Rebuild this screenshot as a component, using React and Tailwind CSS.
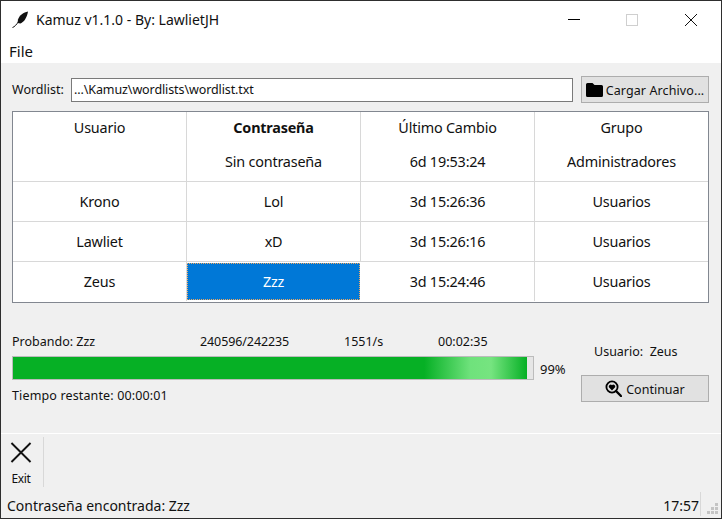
const rows = [
  { user: 'Krono', pass: 'Lol', time: '3d 15:26:36', group: 'Usuarios' },
  { user: 'Lawliet', pass: 'xD', time: '3d 15:26:16', group: 'Usuarios' },
  { user: 'Zeus', pass: 'Zzz', time: '3d 15:24:46', group: 'Usuarios', selected: true },
]

function Cell({ children, className = '' }) {
  return <div className={`flex items-center justify-center ${className}`}>{children}</div>
}

function TableRow({ row }) {
  return (
    <div className="grid h-10 grid-cols-[174px_174px_174px_1fr] border-t border-[#d8d8d8]">
      <Cell className="border-r border-[#d8d8d8]">{row.user}</Cell>
      {row.selected ? (
        <Cell className="mt-px mb-px mr-px border border-dotted border-[#f0a860] bg-[#0078d7] text-white">{row.pass}</Cell>
      ) : (
        <Cell className="border-r border-[#d8d8d8]">{row.pass}</Cell>
      )}
      <Cell className="border-r border-[#d8d8d8]">{row.time}</Cell>
      <Cell>{row.group}</Cell>
    </div>
  )
}

function Feather() {
  return (
    <svg width="17" height="17" viewBox="0 0 17 17">
      <path d="M16 0.500C11.500 1.500 7.500 4 6 8.500L5.500 12 8.500 12.500C12 11 15 6.500 16 0.500Z" fill="#111" />
      <path d="M0.500 16.500c2-.5 4-3 7-7" stroke="#111" strokeWidth="1" fill="none" />
    </svg>
  )
}

function Folder() {
  return (
    <svg width="17" height="14" viewBox="0 0 17 14">
      <path d="M1.500 0H6.500l2 2h7A1.500 1.500 0 0 1 17 3.500v9a1.500 1.500 0 0 1-1.500 1.500h-14A1.500 1.500 0 0 1 0 12.500v-11A1.500 1.500 0 0 1 1.500 0Z" fill="#000" />
    </svg>
  )
}

function HeartSearch() {
  return (
    <svg width="17" height="17" viewBox="0 0 17 17">
      <circle cx="7" cy="7" r="5.600" fill="none" stroke="#000" strokeWidth="1.800" />
      <path d="M11 11l5 5" stroke="#000" strokeWidth="2.400" strokeLinecap="round" />
      <path d="M7 10.500 3.900 7.300a1.900 1.900 0 0 1 3.100-2.100 1.900 1.900 0 0 1 3.100 2.100Z" fill="#000" />
    </svg>
  )
}

function SizeGrip() {
  return (
    <svg width="11" height="11" viewBox="0 0 11 11" fill="#c4c4c4">
      <rect x="8" y="0" width="3" height="3" />
      <rect x="4" y="4" width="3" height="3" />
      <rect x="8" y="4" width="3" height="3" />
      <rect x="0" y="8" width="3" height="3" />
      <rect x="4" y="8" width="3" height="3" />
      <rect x="8" y="8" width="3" height="3" />
    </svg>
  )
}

export default function App() {
  return (
    <div className="flex h-[519px] w-[722px] flex-col overflow-hidden border border-[#2e2e2e] bg-[#f0f0f0] font-['Noto_Sans',sans-serif] text-[#111]">
      {/* title bar + menu */}
      <div className="bg-white">
        <div className="flex h-[37px] items-center">
          <div className="ml-[11px] mr-[7px]"><Feather /></div>
          <span className="text-[14px]">Kamuz v1.1.0 - By: LawlietJH</span>
          <div className="ml-auto flex items-center">
            <div className="mr-[46px] h-px w-3 bg-black" />
            <div className="mr-[47px] h-3 w-3 border border-[#cfcfcf]" />
            <svg className="mr-[24px]" width="12" height="12" viewBox="0 0 12 12">
              <path d="M0 0l12 12M12 0L0 12" stroke="#111" strokeWidth="1" />
            </svg>
          </div>
        </div>
        <div className="flex h-[25px] items-center pl-[8px] pt-[2px] text-[15px]">File</div>
      </div>

      <div className="flex flex-col pl-[11px] pr-[12px] pt-[13px]">
        {/* wordlist row */}
        <div className="flex h-[27px] items-center">
          <span className="w-[59px] pt-[2px] text-[12.500px]">Wordlist:</span>
          <div className="flex h-6 w-[502px] items-center border border-[#7a7a7a] bg-white pl-[2px] pt-[2px] text-[12.500px] tracking-[-0.1px]">...\Kamuz\wordlists\wordlist.txt</div>
          <button className="ml-2 flex h-[27px] flex-1 items-center justify-center gap-[3px] border border-[#adadad] bg-[#e1e1e1] text-[12.500px] tracking-[0.1px]">
            <Folder />
            <span className="pt-[3px]">Cargar Archivo...</span>
          </button>
        </div>

        {/* table */}
        <div className="mt-[8px] h-[192px] border border-[#828790] bg-white text-[14.400px] tracking-[-0.2px]">
          <div className="grid h-[69px] grid-cols-[174px_174px_174px_1fr]">
            {[
              ['Usuario', ''],
              ['Contraseña', 'Sin contraseña'],
              ['Último Cambio', '6d 19:53:24'],
              ['Grupo', 'Administradores'],
            ].map(([head, value], i) => (
              <div key={head} className={`flex flex-col items-center ${i < 3 ? 'border-r border-[#d8d8d8]' : ''}`}>
                <span className={`mt-[6px] h-[34px] leading-[20px] ${i === 1 ? 'font-bold' : ''}`}>{head}</span>
                <span className="leading-[20px]">{value}</span>
              </div>
            ))}
          </div>
          {rows.map(row => (
            <TableRow key={row.user} row={row} />
          ))}
        </div>

        {/* progress */}
        <div className="mt-[29px] flex">
          <div className="w-[522px]">
            <div className="flex h-[20px] items-center text-[12.500px]">
              <span className="w-[188px]">Probando: Zzz</span>
              <span className="w-[144px] tracking-[-0.1px]">240596/242235</span>
              <span className="w-[94px]">1551/s</span>
              <span>00:02:35</span>
            </div>
            <div className="mt-[4px] flex h-[24px] w-[522px] border border-[#bcbcbc] bg-[#e6e6e6]">
              <div className="h-full w-[514px] bg-[linear-gradient(90deg,#06b025_0%,#06b025_80%,#6fe27c_89%,#76e480_93%,#06b025_100%)]" />
            </div>
            <div className="mt-[6px] text-[12.500px] leading-[20px] tracking-[0.14px]">Tiempo restante: 00:00:01</div>
          </div>
          <div className="ml-[6px] mt-[28px] w-[26px] text-[13px]">99%</div>
          <div className="ml-[15px] flex flex-1 flex-col">
            <div className="mt-[10px] h-[20px] pl-[13px] text-[12.500px] leading-[20px]">Usuario:&nbsp; Zeus</div>
            <button className="mt-[13px] flex h-[27px] items-center justify-center gap-[4px] border border-[#adadad] bg-[#e1e1e1] text-[12.500px]">
              <HeartSearch />
              <span className="pt-[3px]">Continuar</span>
            </button>
          </div>
        </div>
      </div>

      {/* toolbar */}
      <div className="mt-auto border-t border-white">
        <div className="flex h-[56px] items-center pl-[1px]">
          <div className="flex h-[50px] w-[42px] flex-col items-center border-r border-[#d8d8d8] pr-[3px]">
            <svg className="mt-[5px]" width="22" height="22" viewBox="0 0 22 22">
              <path d="M1 1l20 20M21 1L1 21" stroke="#111" strokeWidth="2" />
            </svg>
            <span className="mt-[8px] text-[12px] leading-[16px] tracking-[-0.3px]">Exit</span>
          </div>
        </div>
        {/* status bar */}
        <div className="flex h-[28px] items-center pl-[6px] text-[14px]">
          <span className="pt-[3px]">Contraseña encontrada: Zzz</span>
          <span className="ml-auto flex h-[24px] items-center border-r border-[#d8d8d8] pr-px pt-[3px]">17:57</span>
          <div className="ml-[6px] mr-[3px] mt-[8px]">
            <SizeGrip />
          </div>
        </div>
      </div>
    </div>
  )
}
